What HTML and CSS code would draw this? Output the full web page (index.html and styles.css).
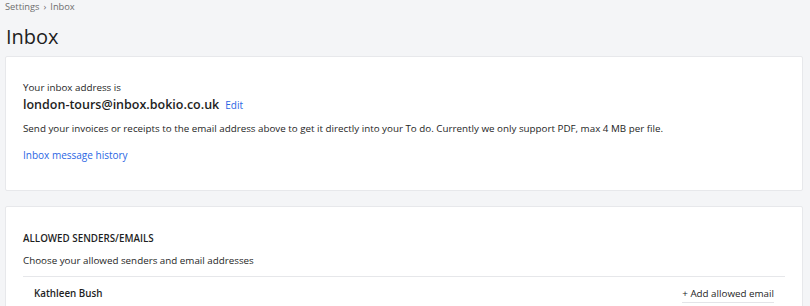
FILE: index.html
```html
<!DOCTYPE html>
<html lang="en">
<head>
<meta charset="utf-8">
<title>Inbox</title>
<link rel="stylesheet" href="styles.css">
</head>
<body>
<div class="page">
  <nav class="crumbs"><span>Settings</span><span class="sep">›</span><span>Inbox</span></nav>
  <h1 class="title">Inbox</h1>
  <section class="card card-address">
    <p class="label">Your inbox address is</p>
    <div class="address-row">
      <span class="address">london-tours@inbox.bokio.co.uk</span>
      <a class="link edit" href="#">Edit</a>
    </div>
    <p class="desc">Send your invoices or receipts to the email address above to get it directly into your To do. Currently we only support PDF, max 4 MB per file.</p>
    <a class="link history" href="#">Inbox message history</a>
  </section>
  <section class="card card-senders">
    <h2 class="section-title">ALLOWED SENDERS/EMAILS</h2>
    <p class="section-sub">Choose your allowed senders and email addresses</p>
    <div class="sender-row">
      <span class="sender-name">Kathleen Bush</span>
      <a class="add-link" href="#">+ Add allowed email</a>
    </div>
  </section>
</div>
</body>
</html>
```
FILE: styles.css
```css
html, body {
  margin: 0;
  padding: 0;
}
body {
  background: #f4f5f7;
  font-family: "Open Sans", "Noto Sans", sans-serif;
  color: #1e1e1e;
  overflow: hidden;
}
.page {
  padding: 0 7px 0 5px;
}
.crumbs {
  font-size: 9.3px;
  line-height: 14px;
  color: #6e6e6e;
  display: flex;
  gap: 4px;
}
.title {
  margin: 8px 0 4px 1px;
  font-size: 20px;
  line-height: 30px;
  font-weight: 400;
  color: #1e1e1e;
}
.card {
  background: #fff;
  border: 1px solid #e7e8eb;
  border-radius: 2px;
}
.card-address {
  padding: 24px 17px 26px;
}
.card-senders {
  margin-top: 15px;
  padding: 24px 17px 0;
}
.label {
  margin: 0;
  font-size: 9.8px;
  line-height: 14px;
}
.address-row {
  margin-top: 3px;
  display: flex;
  align-items: baseline;
  gap: 6px;
  line-height: 14px;
}
.address {
  font-size: 12.5px;
  font-weight: 600;
}
.link {
  color: #2a66e4;
  text-decoration: none;
  font-size: 10px;
}
.desc {
  margin: 9px 0 5px;
  font-size: 9.8px;
  line-height: 16px;
}
.history {
  display: inline-block;
  line-height: 16px;
}
.section-title {
  margin: 0;
  font-size: 9.8px;
  line-height: 16px;
  font-weight: 600;
}
.section-sub {
  margin: 6px 0 7px;
  font-size: 9.8px;
  line-height: 16px;
}
.sender-row {
  border-top: 1px solid #e6e7ea;
  display: flex;
  justify-content: space-between;
  align-items: baseline;
  padding: 9px 11px 7px;
  font-size: 9.8px;
  line-height: 16px;
}
.sender-name {
  font-weight: 600;
}
.add-link {
  color: #1e1e1e;
  text-decoration: none;
  border-bottom: 1px solid #e3e4e8;
}
```
